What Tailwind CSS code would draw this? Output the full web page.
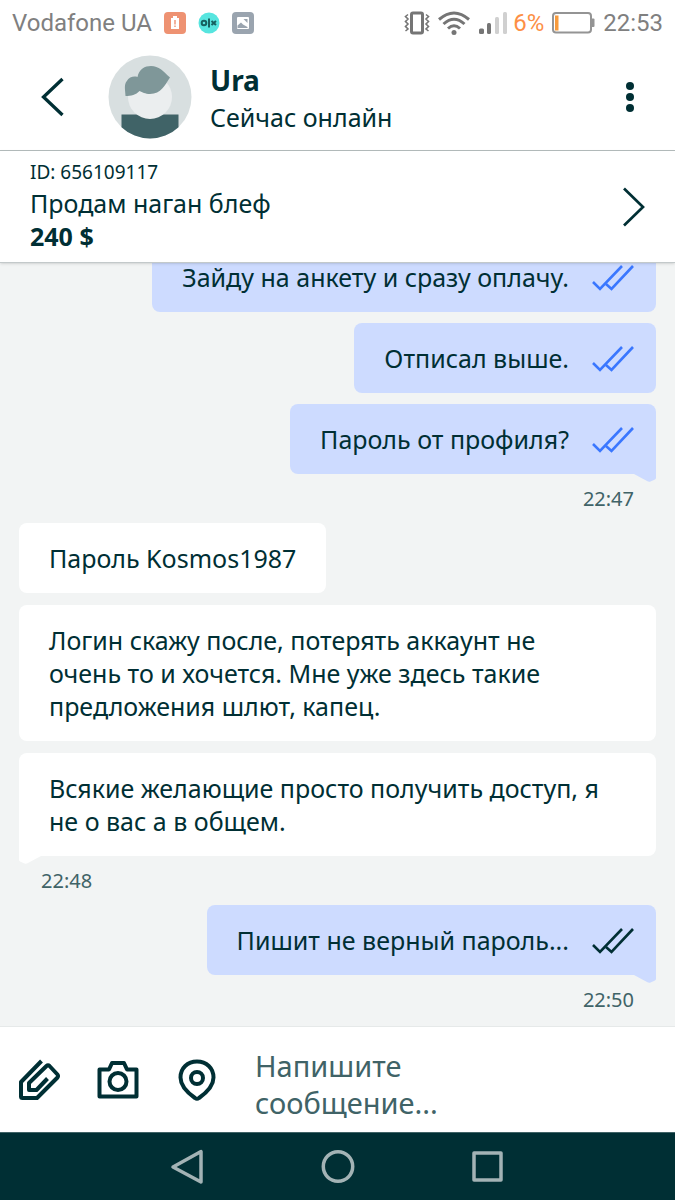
<!DOCTYPE html>
<html lang="ru">
<head>
    <meta charset="UTF-8">
    <meta name="viewport" content="width=device-width, initial-scale=1.0">
    <title>Ura</title>
    <script src="https://cdn.jsdelivr.net/npm/@tailwindcss/browser@4"></script>
</head>
<body class="bg-white text-[#002f34] font-['Noto_Sans',sans-serif]">
    <!-- Shared shapes -->
    <svg class="hidden">
        <symbol id="checks" viewBox="0 0 42 26">
            <g fill="none" stroke="currentColor" stroke-width="2.6">
                <path d="M1 17L8 24L30 1"/>
                <path d="M14 19L19.500 24L41 1"/>
            </g>
        </symbol>
        <symbol id="tail" viewBox="0 0 22 8">
            <path d="M0 0H22V4Q22 5 21 5.400L16.500 7.400Q15 8 13.500 7.300Z" fill="currentColor"/>
        </symbol>
    </svg>

    <div class="h-screen flex flex-col">
        <!-- Status bar -->
        <div class="h-[45px] shrink-0 flex items-center justify-between px-3 text-2xl text-[#808080] font-[Roboto,sans-serif]">
            <div class="flex items-center">
                <span>Vodafone UA</span>
                <svg class="ml-3 w-[22px] h-[22px]" viewBox="0 0 22 22">
                    <rect width="22" height="22" rx="4" fill="#ee9272"/>
                    <path d="M9 4h4v2h2v11H7V6h2z" fill="#fff"/>
                    <path d="M10.300 8h1.400v4.500h-1.400zM10.300 13.500h1.400V15h-1.400z" fill="#ee9272"/>
                </svg>
                <svg class="ml-3 w-[22px] h-[22px]" viewBox="0 0 22 22">
                    <circle cx="11" cy="11" r="10.500" fill="#57e5df"/>
                    <g fill="none" stroke="#17605f" stroke-width="2">
                        <circle cx="6" cy="11" r="2.300"/>
                        <path d="M11 6.500v9M13.500 9l4.500 4M18 9l-4.500 4"/>
                    </g>
                </svg>
                <svg class="ml-3 w-[22px] h-[22px]" viewBox="0 0 22 22">
                    <rect width="22" height="22" rx="4" fill="#9aa4af"/>
                    <rect x="5" y="5" width="12" height="12" rx="1" fill="#fff"/>
                    <path d="M5.500 16V13.500L9 10.500L11 12.500L15.500 15V16zM11.500 7h4v4z" fill="#9aa4af"/>
                </svg>
            </div>
            <div class="flex items-center">
                <svg class="w-[26px] h-6" viewBox="0 0 26 24" fill="none" stroke="#757575">
                    <rect x="7.500" y="2" width="11" height="20" rx="1.500" stroke-width="3"/>
                    <path d="M4 3.500L1.500 5.500L4 8L1.500 10.500L4 13L1.500 15.500L4 18L1.500 20M22 3.500L24.500 5.500L22 8L24.500 10.500L22 13L24.500 15.500L22 18L24.500 20" stroke-width="1.600"/>
                </svg>
                <svg class="ml-2 w-8 h-6" viewBox="0 0 32 24" fill="none" stroke="#757575" stroke-width="3">
                    <path d="M1 8.500Q16-4.500 31 8.500M5.500 13Q16 3.500 26.500 13M10 17.500Q16 12 22 17.500"/>
                    <circle cx="16" cy="21.500" r="2.500" fill="#757575" stroke="none"/>
                </svg>
                <svg class="ml-[9px] w-7 h-6" viewBox="0 0 28 24">
                    <rect x="0" y="17.500" width="5" height="5.500" rx="1.500" fill="#757575"/>
                    <rect x="8" y="12" width="4" height="11" rx="1.500" fill="#757575"/>
                    <rect x="16" y="6" width="4" height="17" rx="1.500" fill="#d0d0d0"/>
                    <rect x="24" y="1" width="4" height="22" rx="1.500" fill="#d0d0d0"/>
                </svg>
                <span class="ml-1.5 text-[#fd8f45]">6%</span>
                <svg class="ml-2 w-[43px] h-6" viewBox="0 0 43 24">
                    <rect x="1" y="2" width="38" height="19.500" rx="3" fill="none" stroke="#949494" stroke-width="2"/>
                    <rect x="3" y="4.500" width="3.500" height="15" fill="#f89b3c"/>
                    <path d="M39 7.500h2.500q1 0 1 1v6.500q0 1-1 1H39z" fill="#949494"/>
                </svg>
                <span class="ml-2">22:53</span>
            </div>
        </div>

        <!-- Header -->
        <header class="h-[106px] shrink-0 flex items-center pb-0.5 pl-[38px] pr-[30px] border-b border-[#b4bcbc]">
            <button type="button" aria-label="Назад">
                <svg class="w-[26px] h-10" viewBox="0 0 26 40" fill="none" stroke="currentColor" stroke-width="3.300">
                    <path d="M24.500 2L5.500 20L24.500 38"/>
                </svg>
            </button>
            <svg class="ml-11 w-[84px] h-[84px]" viewBox="0 0 84 84">
                <circle cx="42" cy="42" r="41.500" fill="#d8dfe0"/>
                <path d="M13.500 59.500H70.500V72.200A41.500 41.500 0 0 1 13.500 72.200Z" fill="#406367"/>
                <circle cx="42" cy="42" r="22" fill="#ebeeef"/>
                <path d="M17.500 41C17 34 16 30 18.500 26.500C21.500 21.500 26 21 29.500 22C31 14 37 11 43 11C51 11 55 16 62 22.500C57 30 53 39 42 39C37 39 34.500 37 31.500 36C28 40 23 41 17.500 41Z" fill="#7f9799"/>
            </svg>
            <div class="ml-[18px] pt-1 flex-1">
                <h1 class="text-[28px] leading-[37px] font-bold">Ura</h1>
                <p class="text-[25px] leading-[37px]">Сейчас онлайн</p>
            </div>
            <button type="button" aria-label="Меню">
                <svg class="w-[30px] h-8" viewBox="0 0 30 32" fill="currentColor">
                    <circle cx="15" cy="5" r="4"/>
                    <circle cx="15" cy="16" r="4"/>
                    <circle cx="15" cy="27" r="4"/>
                </svg>
            </button>
        </header>

        <!-- Ad -->
        <a href="#" class="relative z-10 h-[112px] shrink-0 flex items-center justify-between px-[30px] bg-white border-b border-[#c3c9ca] shadow-sm">
            <span class="flex flex-col pb-1">
                <span class="text-[19px] leading-[30px]">ID: 656109117</span>
                <span class="text-[25px] leading-[33px]">Продам наган блеф</span>
                <span class="text-[25px] leading-[33px] font-bold">240 $</span>
            </span>
            <svg class="w-[22px] h-10" viewBox="0 0 22 40" fill="none" stroke="currentColor" stroke-width="2.700">
                <path d="M1 1.500L20 20L1 38.500"/>
            </svg>
        </a>

        <!-- Messages -->
        <main class="flex-1 min-h-0 overflow-hidden flex flex-col justify-end bg-[#f2f4f4] px-[19px] pb-0.5 text-[25px] leading-[33px]">
            <div class="flex flex-col items-end gap-[11px]">
                <div class="flex items-center bg-[#cddbff] rounded-lg pt-[19px] pb-[18px] pl-[30px] pr-[22px]">
                    <p>Зайду на анкету и сразу оплачу.</p>
                    <svg class="ml-[23px] w-[42px] h-[26px] text-[#3a77ff]"><use href="#checks"/></svg>
                </div>
                <div class="flex items-center bg-[#cddbff] rounded-lg pt-[19px] pb-[18px] pl-[30px] pr-[22px]">
                    <p>Отписал выше.</p>
                    <svg class="ml-[23px] w-[42px] h-[26px] text-[#3a77ff]"><use href="#checks"/></svg>
                </div>
                <div class="relative flex items-center bg-[#cddbff] rounded-lg rounded-br-none pt-[19px] pb-[18px] pl-[30px] pr-[22px]">
                    <p>Пароль от профиля?</p>
                    <svg class="ml-[23px] w-[42px] h-[26px] text-[#3a77ff]"><use href="#checks"/></svg>
                    <svg class="absolute top-full right-0 w-[22px] h-2 text-[#cddbff]"><use href="#tail"/></svg>
                </div>
            </div>
            <time class="h-[49px] shrink-0 flex items-center justify-end pr-[22px] text-xl text-[#406367]">22:47</time>

            <div class="flex flex-col items-start gap-3">
                <p class="bg-white rounded-lg pt-[19px] pb-[18px] px-[30px]">Пароль Kosmos1987</p>
                <p class="w-full bg-white rounded-lg pt-[19px] pb-[18px] px-[30px]">Логин скажу после, потерять аккаунт не<br>очень то и хочется. Мне уже здесь такие<br>предложения шлют, капец.</p>
                <div class="relative w-full bg-white rounded-lg rounded-bl-none pt-[19px] pb-[18px] px-[30px]">
                    <p>Всякие желающие просто получить доступ, я<br>не о вас а в общем.</p>
                    <svg class="absolute top-full left-0 w-[22px] h-2 text-white -scale-x-100"><use href="#tail"/></svg>
                </div>
            </div>
            <time class="h-[49px] shrink-0 flex items-center pl-[22px] text-xl text-[#406367]">22:48</time>

            <div class="flex flex-col items-end">
                <div class="relative flex items-center bg-[#cddbff] rounded-lg rounded-br-none pt-[19px] pb-[18px] pl-[30px] pr-[22px]">
                    <p>Пишит не верный пароль...</p>
                    <svg class="ml-[23px] w-[42px] h-[26px]"><use href="#checks"/></svg>
                    <svg class="absolute top-full right-0 w-[22px] h-2 text-[#cddbff]"><use href="#tail"/></svg>
                </div>
            </div>
            <time class="h-[49px] shrink-0 flex items-center justify-end pr-[22px] text-xl text-[#406367]">22:50</time>
        </main>

        <!-- Composer -->
        <form class="h-[106px] shrink-0 flex items-center pl-[18px] pr-[30px] bg-white border-t border-[#e6e9e9]">
            <button type="button" aria-label="Прикрепить файл">
                <svg class="w-[42px] h-[42px]" viewBox="0 0 42 42" fill="none" stroke="currentColor" stroke-width="4" stroke-linejoin="round">
                    <path d="M23.500 2L3 23V37.500Q3 39 4.500 39H19L39.500 18.500Q40.500 17 39.500 15.500L31.500 7Q30 5.500 28.500 7L11 24V31H18.500L29.500 19.500"/>
                </svg>
            </button>
            <button type="button" class="ml-[37px]" aria-label="Камера">
                <svg class="w-[42px] h-[42px]" viewBox="0 0 42 42" fill="none" stroke="currentColor" stroke-width="4" stroke-linejoin="round">
                    <path d="M2.500 10.500H12L15 4H27L30 10.500H39.500V37.500H2.500Z"/>
                    <circle cx="21" cy="22.500" r="8.500"/>
                </svg>
            </button>
            <button type="button" class="ml-[37px]" aria-label="Местоположение">
                <svg class="w-[42px] h-[42px]" viewBox="0 0 42 42" fill="none" stroke="currentColor" stroke-width="4" stroke-linejoin="round">
                    <path d="M21 2.500C11.500 2.500 4.500 9 4.500 18.500C4.500 26 10.500 33 19 39Q21 40.500 23 39C31.500 33 37.500 26 37.500 18.500C37.500 9 30.500 2.500 21 2.500Z"/>
                    <circle cx="21" cy="19" r="6"/>
                </svg>
            </button>
            <textarea rows="2" aria-label="Сообщение" placeholder="Напишите&#10;сообщение..." class="ml-[37px] mt-2 flex-1 min-w-0 resize-none overflow-hidden outline-none text-[29px] leading-[37px] placeholder:text-[#406367]"></textarea>
        </form>

        <!-- System navigation -->
        <nav class="h-[68px] shrink-0 flex items-center justify-center gap-[114px] bg-[#002f34] text-[#a3b3b5] border-t border-[#406367]">
            <button type="button" aria-label="Назад">
                <svg class="w-9 h-9" viewBox="0 0 36 36" fill="none" stroke="currentColor" stroke-width="3.500" stroke-linejoin="round">
                    <path d="M31 2.500V33L3 18Z"/>
                </svg>
            </button>
            <button type="button" aria-label="Домой">
                <svg class="w-9 h-9" viewBox="0 0 36 36" fill="none" stroke="currentColor" stroke-width="3.500">
                    <circle cx="18" cy="17.500" r="14.700"/>
                </svg>
            </button>
            <button type="button" aria-label="Недавние">
                <svg class="w-9 h-9" viewBox="0 0 36 36" fill="none" stroke="currentColor" stroke-width="3.500" stroke-linejoin="round">
                    <rect x="4" y="4" width="27" height="27"/>
                </svg>
            </button>
        </nav>
    </div>
</body>
</html>
